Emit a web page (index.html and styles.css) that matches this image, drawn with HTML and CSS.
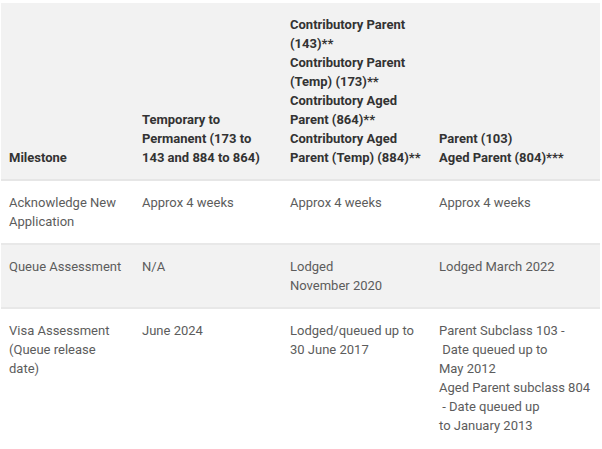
FILE: index.html
```html
<!DOCTYPE html>
<html>
<head>
<meta charset="utf-8">
<link rel="stylesheet" href="styles.css">
</head>
<body>
<table class="tbl">
  <colgroup>
    <col class="c1"><col class="c2"><col class="c3"><col class="c4">
  </colgroup>
  <thead>
    <tr class="head">
      <th>Milestone</th>
      <th>Temporary to<br>Permanent (173 to<br>143 and 884 to 864)</th>
      <th>Contributory Parent<br>(143)**<br>Contributory Parent<br>(Temp) (173)**<br>Contributory Aged<br>Parent (864)**<br>Contributory Aged<br>Parent (Temp) (884)**</th>
      <th>Parent (103)<br>Aged Parent (804)***</th>
    </tr>
  </thead>
  <tbody>
    <tr class="row">
      <td>Acknowledge New<br>Application</td>
      <td>Approx 4 weeks</td>
      <td>Approx 4 weeks</td>
      <td>Approx 4 weeks</td>
    </tr>
    <tr class="row alt">
      <td>Queue Assessment</td>
      <td>N/A</td>
      <td>Lodged<br>November 2020</td>
      <td>Lodged March 2022</td>
    </tr>
    <tr class="row last">
      <td>Visa Assessment<br>(Queue release<br>date)</td>
      <td>June 2024</td>
      <td>Lodged/queued up to<br>30 June 2017</td>
      <td>Parent Subclass 103 -<br>&nbsp;Date queued up to<br>May 2012<br>Aged Parent subclass 804<br>&nbsp;- Date queued up<br>to January 2013</td>
    </tr>
  </tbody>
</table>
</body>
</html>
```

FILE: styles.css
```css
html, body {
  margin: 0;
  padding: 0;
  background: #ffffff;
}
body {
  padding: 3px 2px 0 1px;
  font-family: Roboto, "Liberation Sans", sans-serif;
  font-size: 13px;
  line-height: 19px;
}
.tbl {
  width: 599px;
  border-collapse: collapse;
  table-layout: fixed;
}
.c1 { width: 133px; }
.c2 { width: 148px; }
.c3 { width: 149px; }
.c4 { width: 169px; }
.tbl th, .tbl td {
  padding: 12px 8px;
  text-align: left;
  white-space: nowrap;
}
.head {
  background: #f2f2f2;
  border-bottom: 2px solid #e6e6e6;
}
.head th {
  vertical-align: bottom;
  font-weight: 700;
  color: #333333;
}
.row td {
  vertical-align: top;
  color: #5c5c5c;
}
.row {
  border-bottom: 2px solid #e8e8e8;
}
.alt {
  background: #f2f2f2;
}
.last {
  border-bottom: none;
}
```
